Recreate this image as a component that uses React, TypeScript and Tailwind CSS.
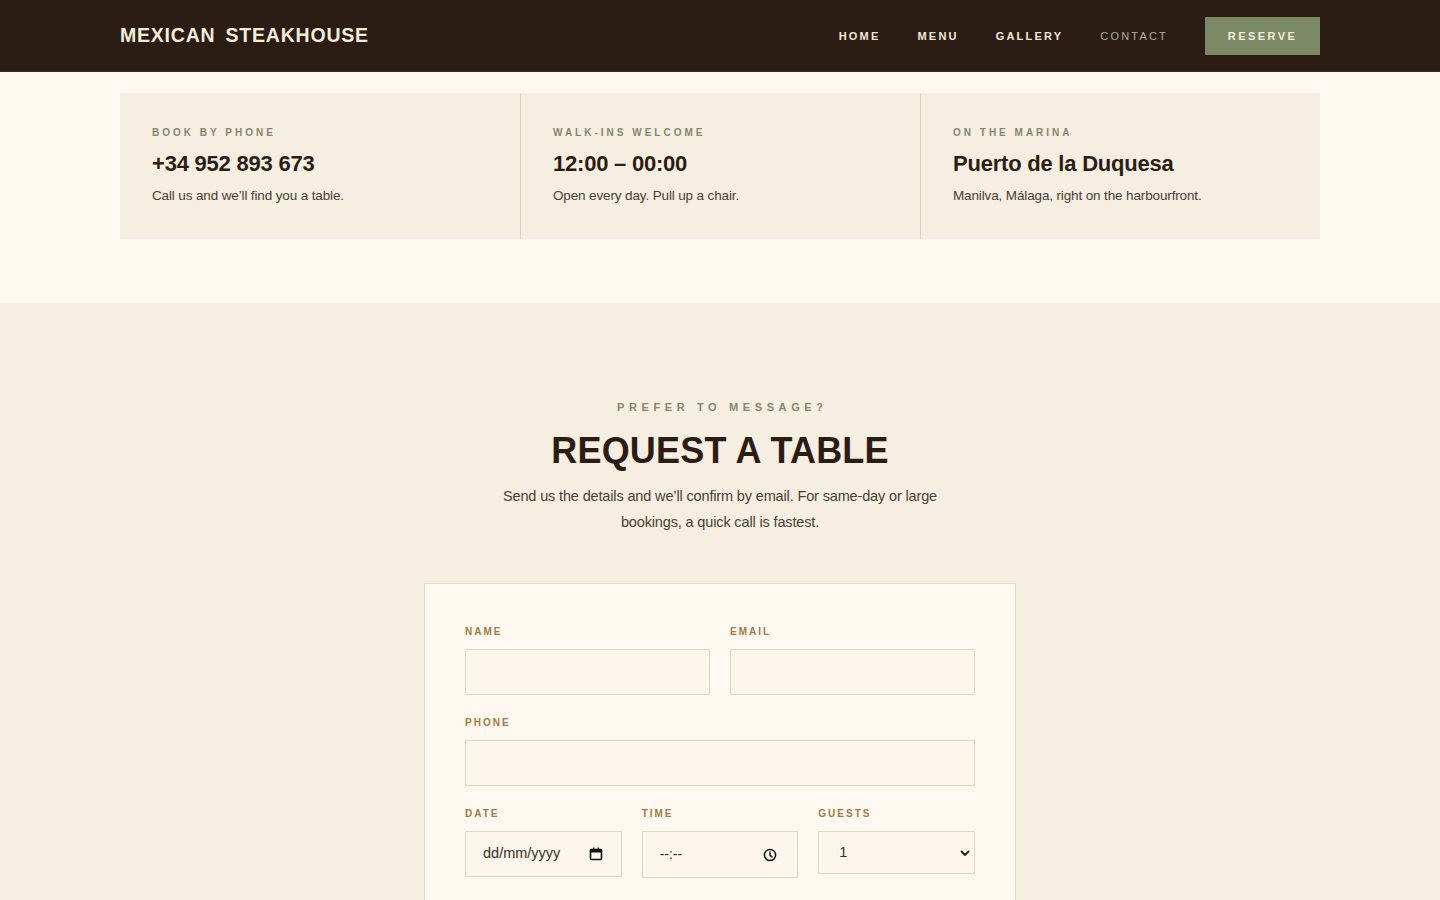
import React from "react";

const font = { fontFamily: '"Liberation Sans", Arial, sans-serif' };

function InfoCard({ eyebrow, title, text, border }: { eyebrow: string; title: string; text: string; border?: boolean }) {
  return (
    <div className={`px-8 pt-[35px] pb-[32px] ${border ? "border-l border-[#ddd0b4]" : ""}`}>
      <div className="text-[10px] font-bold tracking-[0.3em] text-[#85876d] uppercase leading-none">{eyebrow}</div>
      <div className="mt-[12px] text-[22px] font-bold text-[#2b1d13] leading-[28px] tracking-[-0.01em]">{title}</div>
      <div className="mt-[7px] text-[13.5px] text-[#4a3e33] leading-[22px] tracking-[-0.01em]">{text}</div>
    </div>
  );
}

function Label({ children }: { children: React.ReactNode }) {
  return <div className="text-[10px] font-bold tracking-[0.2em] text-[#a37a47] uppercase leading-none mb-[12px]">{children}</div>;
}

const inputCls = "w-full h-[46px] bg-[#fcf6ec] border border-[#e2d5b8] outline-none px-4 text-[14px] text-[#3a2e24]";

export default function App() {
  return (
    <div style={font} className="min-h-screen bg-[#f5eee1]">
      <header className="h-[72px] bg-[#2b1d13] border-b border-[#3a2b1f]">
        <div className="mx-auto w-[1200px] h-full flex items-center justify-between">
          <div className="text-[19.5px] font-bold text-[#f6ecdc] tracking-[0.04em] [word-spacing:4px] pt-[1px]">MEXICAN STEAKHOUSE</div>
          <nav className="flex items-center gap-[37px] pt-[1px]">
            <a className="text-[11px] font-bold tracking-[0.2em] text-[#f3e9d8]">HOME</a>
            <a className="text-[11px] font-bold tracking-[0.2em] text-[#f3e9d8]">MENU</a>
            <a className="text-[11px] font-bold tracking-[0.2em] text-[#f3e9d8]">GALLERY</a>
            <a className="text-[11px] font-normal tracking-[0.2em] text-[#aeb093]">CONTACT</a>
            <a className="h-[38px] w-[115px] flex items-center justify-center bg-[#7b8966] text-[11px] font-bold tracking-[0.22em] text-[#f5ecdc]">RESERVE</a>
          </nav>
        </div>
      </header>

      <section className="bg-[#fdf9f0] pt-[21px] pb-[64px]">
        <div className="mx-auto w-[1200px] grid grid-cols-3 bg-[#f5eee1]">
          <InfoCard eyebrow="Book by phone" title="+34 952 893 673" text="Call us and we’ll find you a table." />
          <InfoCard border eyebrow="Walk-ins welcome" title="12:00 – 00:00" text="Open every day. Pull up a chair." />
          <InfoCard border eyebrow="On the marina" title="Puerto de la Duquesa" text="Manilva, Málaga, right on the harbourfront." />
        </div>
      </section>

      <section className="pt-[99px] pb-[80px]">
        <div className="flex flex-col items-center text-center">
          <div className="text-[11px] font-bold tracking-[0.42em] text-[#85876d] leading-none pl-[0.42em]">PREFER TO MESSAGE?</div>
          <h1 className="mt-[16px] text-[36px] font-bold text-[#2b1d13] leading-[44px] tracking-[0.005em]">REQUEST A TABLE</h1>
          <p className="mt-[10px] w-[450px] text-[14.5px] leading-[26px] text-[#4a3e33] tracking-[-0.01em]">
            Send us the details and we’ll confirm by email. For same-day or large bookings, a quick call is fastest.
          </p>
        </div>

        <form className="mx-auto mt-[48px] w-[592px] bg-[#fdf9f0] border border-[#e5dcc5] px-10 pt-[43px] pb-10">
          <div className="grid grid-cols-2 gap-x-5">
            <div>
              <Label>Name</Label>
              <input className={inputCls} />
            </div>
            <div>
              <Label>Email</Label>
              <input className={inputCls} />
            </div>
          </div>
          <div className="mt-[23px]">
            <Label>Phone</Label>
            <input className={inputCls} />
          </div>
          <div className="mt-[23px] grid grid-cols-3 gap-x-5">
            <div>
              <Label>Date</Label>
              <div className="h-[46px] bg-[#fcf6ec] border border-[#e2d5b8] flex items-center justify-between pl-[17px] pr-[18px]">
                <span className="text-[14.5px] text-[#3a2e24]">dd/mm/yyyy</span>
                <svg width="14" height="14" viewBox="0 0 14 14" fill="none">
                  <rect x="1.5" y="2.5" width="11" height="10" rx="1" stroke="#111" strokeWidth="1.6" />
                  <rect x="1.5" y="2.5" width="11" height="3" fill="#111" />
                  <rect x="4" y="0.5" width="1.4" height="2.5" fill="#111" />
                  <rect x="8.6" y="0.5" width="1.4" height="2.5" fill="#111" />
                </svg>
              </div>
            </div>
            <div>
              <Label>Time</Label>
              <div className="h-[47px] bg-[#fcf6ec] border border-[#e2d5b8] flex items-center justify-between pl-[17px] pr-[20px]">
                <span className="text-[14px] text-[#3a2e24]">--:--</span>
                <svg width="14" height="14" viewBox="0 0 14 14" fill="none">
                  <circle cx="7" cy="7" r="5.6" stroke="#111" strokeWidth="1.5" />
                  <path d="M7 4v3.3l2 1.6" stroke="#111" strokeWidth="1.4" strokeLinecap="round" />
                </svg>
              </div>
            </div>
            <div>
              <Label>Guests</Label>
              <div className="h-[43px] bg-[#fcf6ec] border border-[#e2d5b8] flex items-center justify-between pl-[20px] pr-[3px]">
                <span className="text-[14.5px] text-[#3a2e24]">1</span>
                <svg width="12" height="12" viewBox="0 0 12 12" fill="none">
                  <path d="M2.5 4.5L6 8l3.5-3.5" stroke="#2b1d13" strokeWidth="1.8" strokeLinecap="round" strokeLinejoin="round" />
                </svg>
              </div>
            </div>
          </div>
          <div className="mt-[27px]">
            <Label>Message</Label>
            <textarea className="w-full h-[120px] bg-[#fcf6ec] border border-[#e2d5b8] outline-none p-4 text-[14px]" />
          </div>
          <button type="button" className="mt-6 w-full h-[48px] bg-[#7b8966] text-[11px] font-bold tracking-[0.22em] text-[#f5ecdc]">SEND REQUEST</button>
        </form>
      </section>
    </div>
  );
}
